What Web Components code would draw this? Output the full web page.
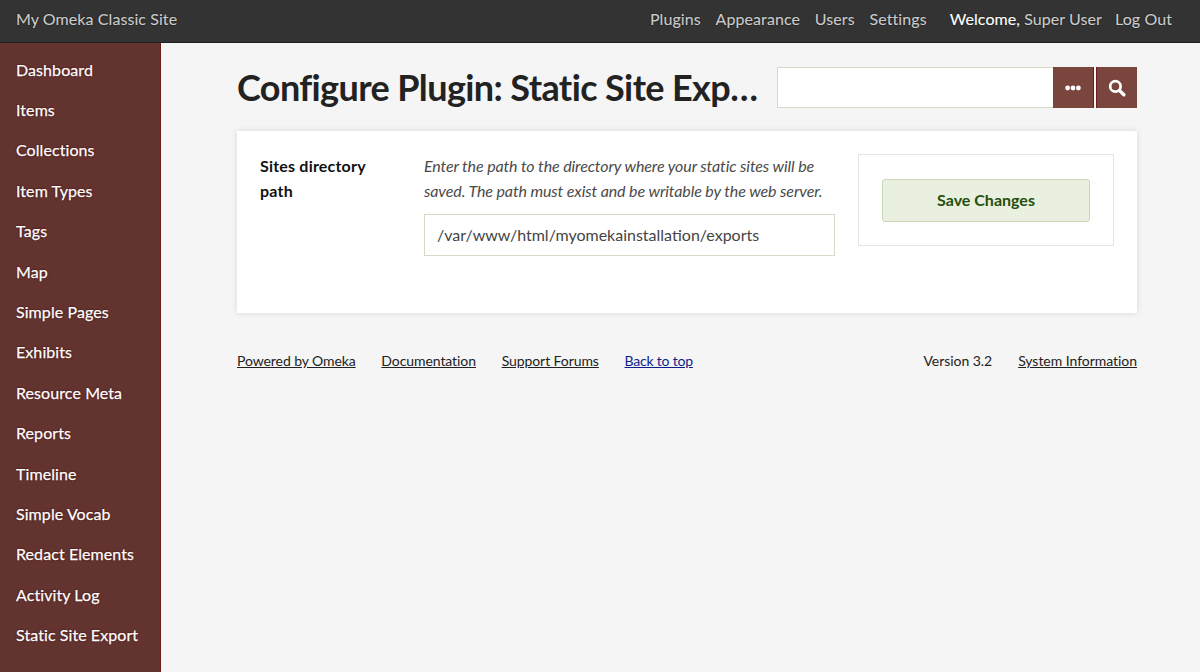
<!DOCTYPE html>
<html lang="en">
<head>
<meta charset="utf-8">
<title>Configure Plugin: Static Site Export</title>
<style>
  html, body { margin: 0; height: 100%; overflow: hidden; }
  body { background: #f5f5f5; font-family: Lato, "Open Sans", sans-serif; font-size: 16px; color: #222; }
</style>
</head>
<body>
<admin-app></admin-app>
<script>
class AdminTopbar extends HTMLElement {
  connectedCallback() {
    this.attachShadow({ mode: 'open' });
    this.shadowRoot.innerHTML = `
      <style>
        :host {
          display: flex;
          align-items: center;
          justify-content: space-between;
          height: 36px;
          background: #333;
          border-bottom: 1px solid #1f1f1f;
          padding: 0 28px 6px 16px;
          color: #ccc;
          letter-spacing: .08px;
          -webkit-text-stroke: .2px;
          text-shadow: 0 0 1px #000, 0 0 1px #000;
        }
        a { color: #ccc; text-decoration: none; }
        nav { display: flex; align-items: center; }
        nav a { margin-left: 14.8px; }
        .welcome { margin-left: 23px; color: #fff; }
        .welcome a { margin: 0; }
        nav .logout { margin-left: 13px; }
      </style>
      <a href="#">My Omeka Classic Site</a>
      <nav>
        <a href="#">Plugins</a>
        <a href="#">Appearance</a>
        <a href="#">Users</a>
        <a href="#">Settings</a>
        <span class="welcome">Welcome, <a href="#">Super User</a></span>
        <a class="logout" href="#">Log Out</a>
      </nav>
    `;
  }
}
customElements.define('admin-topbar', AdminTopbar);

class AdminSidebar extends HTMLElement {
  connectedCallback() {
    const items = ['Dashboard', 'Items', 'Collections', 'Item Types', 'Tags', 'Map', 'Simple Pages', 'Exhibits',
      'Resource Meta', 'Reports', 'Timeline', 'Simple Vocab', 'Redact Elements', 'Activity Log', 'Static Site Export'];
    this.attachShadow({ mode: 'open' });
    this.shadowRoot.innerHTML = `
      <style>
        :host {
          display: block;
          flex: none;
          width: 160px;
          background: #62332f;
          border-right: 1px solid #6f1d1b;
          padding-top: 6.4px;
        }
        a {
          display: block;
          padding: 8.215px 0 8.215px 16px;
          line-height: 24px;
          color: #fff;
          letter-spacing: .08px;
          -webkit-text-stroke: .25px;
          text-decoration: none;
          text-shadow: 0 0 1px #3d0a0a, 0 0 2px #4a0f0f;
        }
      </style>
      ${items.map(i => `<a href="#">${i}</a>`).join('')}
    `;
  }
}
customElements.define('admin-sidebar', AdminSidebar);

class SearchBox extends HTMLElement {
  connectedCallback() {
    this.attachShadow({ mode: 'open' });
    this.shadowRoot.innerHTML = `
      <style>
        :host { display: flex; flex: none; width: 360px; height: 41px; margin-left: 19px; }
        input {
          flex: 1;
          min-width: 0;
          box-sizing: border-box;
          height: 41px;
          background: #fff;
          border: 1px solid #d8d8c4;
          border-right: 0;
          margin: 0;
          padding: 0 12px;
        }
        button {
          width: 41px;
          height: 41px;
          padding: 0;
          margin: 0;
          background: #7a453d;
          border: 0;
          border-right: 1px solid #6f1d1b;
          display: flex;
          align-items: center;
          justify-content: center;
        }
        button + button { margin-left: 2px; border-left: 1px solid #6f1d1b; border-right: 0; }
        svg { display: block; }
      </style>
      <input type="text" aria-label="Search">
      <button aria-label="Advanced search">
        <svg width="16" height="6" viewBox="0 0 16 6" fill="#fff"><circle cx="2.6" cy="3" r="2.4"/><circle cx="8" cy="3" r="2.4"/><circle cx="13.4" cy="3" r="2.4"/></svg>
      </button>
      <button aria-label="Search">
        <svg width="18" height="18" viewBox="0 0 18 18" fill="none" stroke="#fff"><circle cx="7.4" cy="7.4" r="5.2" stroke-width="2.7"/><path d="M11.4 11.4 L15.8 15.8" stroke-width="3.4" stroke-linecap="round"/></svg>
      </button>
    `;
  }
}
customElements.define('search-box', SearchBox);

class ConfigForm extends HTMLElement {
  connectedCallback() {
    this.attachShadow({ mode: 'open' });
    this.shadowRoot.innerHTML = `
      <style>
        :host {
          display: flex;
          align-items: flex-start;
          height: 182px;
          box-sizing: border-box;
          background: #fff;
          box-shadow: 0 0 6px rgba(0,0,0,.12);
          padding: 23px;
          margin-top: 23px;
          line-height: 24.5px;
        }
        label { flex: none; width: 130px; margin-right: 34px; font-weight: 700; color: #111; letter-spacing: .2px; }
        .field { flex: none; width: 411px; margin-right: 23px; }
        p { margin: 0 0 11px; font-style: italic; color: #4a4a4a; letter-spacing: -.11px; }
        input {
          display: block;
          width: 100%;
          height: 42px;
          box-sizing: border-box;
          border: 1px solid #d8d8c4;
          background: #fff;
          padding: 0 12px 2px;
          margin: 0;
          font: inherit;
          color: #444;
        }
        .save {
          flex: none;
          width: 256px;
          height: 92px;
          box-sizing: border-box;
          border: 1px solid #e6e6dc;
          padding: 23.5px 23px;
        }
        button {
          display: block;
          width: 100%;
          height: 43.5px;
          padding: 0 0 1px;
          background: #e9f0e0;
          border: 1px solid #c9d8b6;
          border-radius: 3px;
          font: 700 16px Lato, sans-serif;
          color: #264f0a;
        }
      </style>
      <label for="path">Sites directory path</label>
      <div class="field">
        <p>Enter the path to the directory where your static sites will be saved. The path must exist and be writable by the web server.</p>
        <input id="path" type="text" value="/var/www/html/myomekainstallation/exports">
      </div>
      <div class="save"><button>Save Changes</button></div>
    `;
  }
}
customElements.define('config-form', ConfigForm);

class AdminFooter extends HTMLElement {
  connectedCallback() {
    this.attachShadow({ mode: 'open' });
    this.shadowRoot.innerHTML = `
      <style>
        :host { display: flex; margin-top: 38px; font-size: 14px; line-height: 20px; color: #222; letter-spacing: -.08px; }
        a { color: #222; margin-right: 25.7px; }
        a.top { color: #0b1f8a; letter-spacing: -.2px; }
        .right { margin-left: auto; letter-spacing: -.04px; }
        .right a { margin: 0 0 0 26px; }
      </style>
      <a href="#">Powered by Omeka</a>
      <a href="#">Documentation</a>
      <a href="#">Support Forums</a>
      <a class="top" href="#">Back to top</a>
      <div class="right">Version 3.2<a href="#">System Information</a></div>
    `;
  }
}
customElements.define('admin-footer', AdminFooter);

class AdminApp extends HTMLElement {
  connectedCallback() {
    this.attachShadow({ mode: 'open' });
    this.shadowRoot.innerHTML = `
      <style>
        :host { display: flex; flex-direction: column; height: 672px; overflow: hidden; }
        .body { flex: 1; display: flex; min-height: 0; }
        main { flex: none; width: 900px; margin-left: 76px; padding-top: 24px; }
        header { display: flex; align-items: center; justify-content: space-between; height: 41px; }
        h1 {
          flex: 1;
          min-width: 0;
          margin: 0 0 2px;
          font-size: 36px;
          font-weight: 700;
          line-height: 44px;
          letter-spacing: -.61px;
          color: #222;
          white-space: nowrap;
        }
      </style>
      <admin-topbar></admin-topbar>
      <div class="body">
        <admin-sidebar></admin-sidebar>
        <main>
          <header>
            <h1>Configure Plugin: Static Site Exp…</h1>
            <search-box></search-box>
          </header>
          <config-form></config-form>
          <admin-footer></admin-footer>
        </main>
      </div>
    `;
  }
}
customElements.define('admin-app', AdminApp);
</script>
</body>
</html>
